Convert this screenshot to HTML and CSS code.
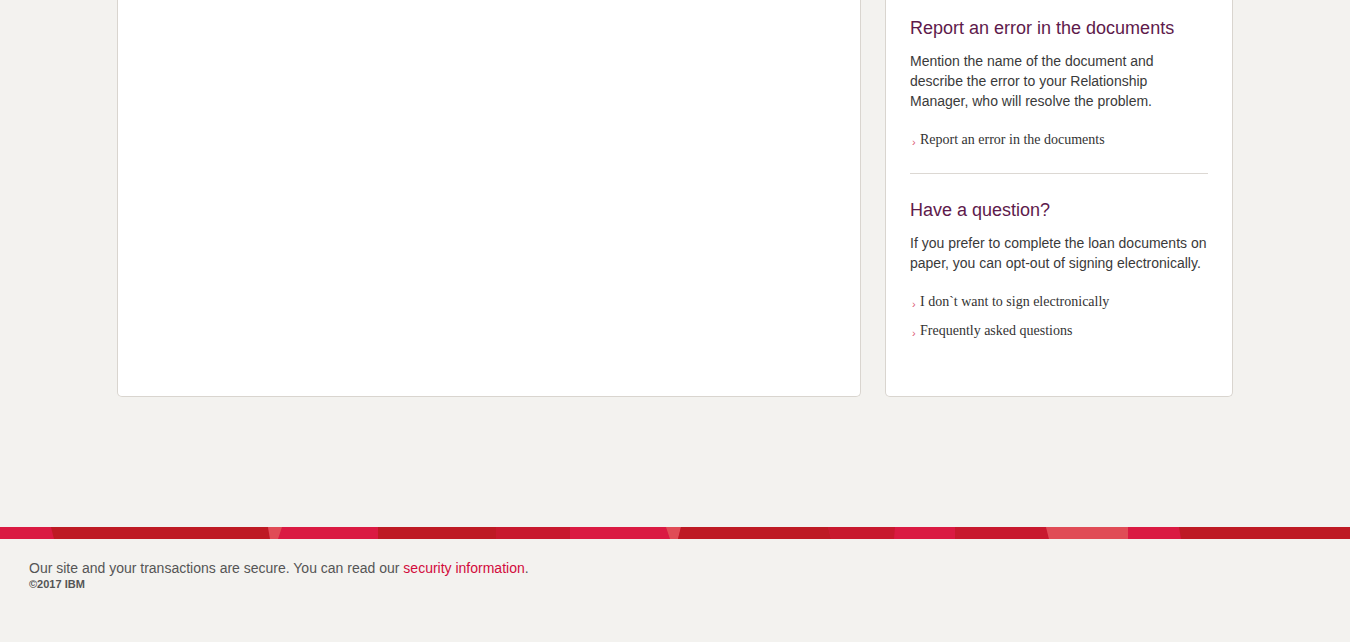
FILE: index.html
```html
<!DOCTYPE html>
<html lang="en">
<head>
<meta charset="utf-8">
<title>Documents</title>
<link rel="stylesheet" href="styles.css">
</head>
<body>
<main class="page">
  <div class="layout">
    <section class="card card-main"></section>
    <aside class="card card-side">
      <h2 class="side-title">Report an error in the documents</h2>
      <p class="side-text">Mention the name of the document and describe the error to your Relationship Manager, who will resolve the problem.</p>
      <ul class="links">
        <li><a href="#" class="link"><span class="chev">›</span>Report an error in the documents</a></li>
      </ul>
      <hr class="divider">
      <h2 class="side-title second">Have a question?</h2>
      <p class="side-text">If you prefer to complete the loan documents on paper, you can opt-out of signing electronically.</p>
      <ul class="links">
        <li><a href="#" class="link"><span class="chev">›</span>I don`t want to sign electronically</a></li>
        <li><a href="#" class="link"><span class="chev">›</span>Frequently asked questions</a></li>
      </ul>
    </aside>
  </div>
</main>
<footer class="footer">
  <svg class="stripe" viewBox="0 0 1350 12" preserveAspectRatio="none" aria-hidden="true">
    <rect x="0" y="0" width="1350" height="12" fill="#da1a42"/>
    <polygon points="51,0 268,0 270,12 54,12" fill="#be1a24"/>
    <polygon points="268,0 282,0 278,12 270,12" fill="#e04c56"/>
    <polygon points="378,0 496,0 496,12 378,12" fill="#be1a24"/>
    <polygon points="496,0 570,0 570,12 496,12" fill="#c8192e"/>
    <polygon points="666,0 681,0 678,12 670,12" fill="#e04c56"/>
    <polygon points="681,0 828,0 831,12 678,12" fill="#be1a24"/>
    <polygon points="828,0 895,0 894,12 831,12" fill="#c8192e"/>
    <polygon points="955,0 1046,0 1049,12 955,12" fill="#c8192e"/>
    <polygon points="1046,0 1128,0 1128,12 1049,12" fill="#e04c56"/>
    <polygon points="1179,0 1350,0 1350,12 1181,12" fill="#be1a24"/>
  </svg>
  <div class="footer-inner">
    <p class="secure">Our site and your transactions are secure. You can read our <a href="#" class="footer-link">security information</a>.</p>
    <p class="copy">©2017 IBM</p>
  </div>
</footer>
</body>
</html>
```
FILE: styles.css
```css
html, body {
  margin: 0;
  padding: 0;
  background: #f3f2ef;
  font-family: "Liberation Sans", Arial, sans-serif;
  color: #333;
}

.page {
  height: 527px;
}

.layout {
  width: 1116px;
  margin: 0 auto;
  display: flex;
  gap: 24px;
  align-items: stretch;
}

.card {
  background: #fff;
  border: 1px solid #d9d5cf;
  border-top: 0;
  border-radius: 0 0 5px 5px;
  box-sizing: border-box;
}

.card-main {
  width: 744px;
}

.card-side {
  width: 348px;
  padding: 17px 24px 55px 24px;
}

.side-title {
  margin: 0;
  font-size: 18px;
  line-height: 22px;
  font-weight: normal;
  color: #5e1a4b;
}

.side-title.second {
  margin-top: 25px;
}

.side-text {
  margin: 12px 0 0 0;
  font-size: 14px;
  line-height: 20px;
  color: #3a3a3a;
}

.links {
  list-style: none;
  margin: 19px 0 0 0;
  padding: 0;
  display: flex;
  flex-direction: column;
  gap: 9px;
}

.link {
  font-family: "Liberation Serif", "Times New Roman", serif;
  font-size: 14px;
  line-height: 20px;
  color: #333;
  text-decoration: none;
  display: flex;
  align-items: baseline;
}

.chev {
  font-family: "Liberation Sans", Arial, sans-serif;
  font-size: 11px;
  color: #dc5a75;
  width: 10px;
  padding-left: 2px;
  box-sizing: border-box;
  position: relative;
  top: 2px;
}

.divider {
  border: 0;
  border-top: 1px solid #dcd8d3;
  margin: 23px 0 0 0;
  height: 0;
}

.footer {
  background: #f3f2ef;
  height: 115px;
}

.stripe {
  display: block;
  width: 100%;
  height: 12px;
}

.footer-inner {
  padding: 19px 29px 0 29px;
}

.secure {
  margin: 0;
  font-size: 14px;
  line-height: 20px;
  color: #555;
}

.footer-link {
  color: #d20b3c;
  text-decoration: none;
}

.copy {
  margin: 0;
  font-size: 11px;
  line-height: 12px;
  font-weight: bold;
  color: #555;
}
```
